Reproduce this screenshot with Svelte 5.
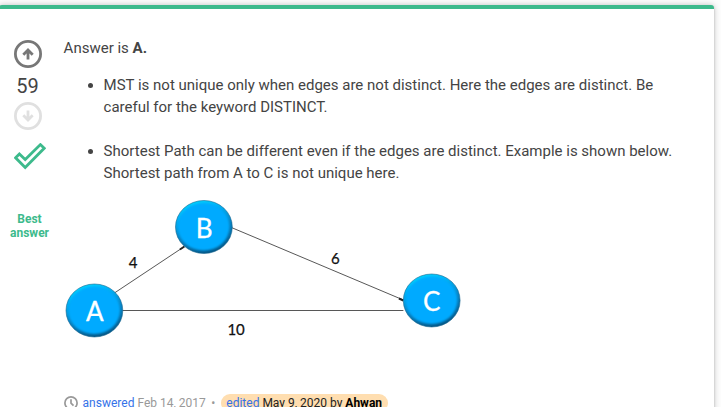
<script>
  const points = [
    ['MST is not unique only when edges are not distinct. Here the edges are distinct. Be', 'careful for the keyword DISTINCT.'],
    ['Shortest Path can be different even if the edges are distinct. Example is shown below.', 'Shortest path from A to C is not unique here.']
  ];
  const nodes = [
    { name: 'A', x: 94, y: 310.5, tx: 94.3, ty: 320.5 },
    { name: 'B', x: 203.5, y: 227, tx: 203.8, ty: 237.5 },
    { name: 'C', x: 431.3, y: 300.5, tx: 431.3, ty: 310.5 }
  ];
</script>

<div class="page">
  <article class="card">
    <aside class="votes">
      <svg class="vote" viewBox="0 0 28 28">
        <circle cx="14" cy="14" r="12.6" />
        <path d="M14 19.6V10.5M9.3 14.8L14 10.1L18.7 14.8" />
      </svg>
      <div class="score">59</div>
      <svg class="vote down" viewBox="0 0 28 28">
        <circle cx="14" cy="14" r="12.6" />
        <path d="M14 8.4V17.5M9.3 13.2L14 17.9L18.7 13.2" />
      </svg>
      <svg class="check" viewBox="0 0 32 27">
        <path d="M1.6 14.8L5.4 11L11.2 16.5L26.4 1.6L30.2 5.3L11.2 24.6Z" />
      </svg>
      <div class="best">Best<br />answer</div>
    </aside>
    <section class="content">
      <p>Answer is <b>A.</b></p>
      <ul>
        {#each points as [first, second]}
          <li>{first}<br />{second}</li>
        {/each}
      </ul>
      <svg class="graph" viewBox="63.6 196 400 144" width="400" height="144">
        <defs>
          <linearGradient id="rim" x1="0.3" y1="0" x2="0.65" y2="1">
            <stop offset="0" stop-color="#00d8ff" />
            <stop offset="0.22" stop-color="#00b4f6" />
            <stop offset="0.55" stop-color="#0884c4" />
            <stop offset="1" stop-color="#045482" />
          </linearGradient>
          <filter id="soften" x="-10%" y="-10%" width="120%" height="120%">
            <feGaussianBlur stdDeviation="1" />
          </filter>
        </defs>
        <g class="edges">
          <path d="M114 293L184 246.5M231 227.5L403 300M122 310.5H403" />
          <path class="tip" d="M179.5 249.5L184 246.5M398.5 298.5L403 300.5" />
        </g>
        {#each nodes as node}
          <ellipse cx={node.x} cy={node.y} rx="28.4" ry="26.5" fill="url(#rim)" stroke="#17658f" stroke-width=".6" />
          <ellipse cx={node.x - 0.2} cy={node.y - 0.2} rx="25.8" ry="23.8" fill="#00aaff" filter="url(#soften)" />
          <text class="name" x={node.tx} y={node.ty}>{node.name}</text>
        {/each}
        <text class="weight" x="132.8" y="268">4</text>
        <text class="weight" x="335" y="264">6</text>
        <text class="weight" x="235.7" y="335">10</text>
      </svg>
      <footer>
        <svg class="clock" viewBox="0 0 14 14">
          <circle cx="7" cy="7" r="6.1" />
          <path d="M7 3.2V7.2L9.5 9.7" />
        </svg>
        <span class="answered"><a>answered</a> Feb 14, 2017</span>
        <span class="dot">•</span>
        <span class="edited"><a>edited</a> May 9, 2020 by <b>Ahwan</b></span>
      </footer>
    </section>
  </article>
</div>

<style>
  :global(body) { margin: 0; background: #fdfdfd; overflow: hidden; }
  .page { width: 721px; height: 407px; overflow: hidden; box-sizing: border-box; padding-top: 5px; background: #fdfdfd; font-family: Roboto, sans-serif; color: #444; }
  .card { display: flex; box-sizing: border-box; width: 715px; height: 440px; margin-left: -1px; padding-left: 1px; background: #fff; border-top: 4px solid #3dba8c; border-radius: 3px; box-shadow: 0 0 6px rgba(0,0,0,.24), 0 1px 2px rgba(0,0,0,.2); }
  .votes { width: 63.6px; padding-top: 30px; display: flex; flex-direction: column; flex-shrink: 0; }
  .vote { width: 28px; height: 28px; margin-left: 13.7px; margin-top: .5px; fill: none; stroke: #777; stroke-width: 2.8; }
  .down { stroke: #e0e0e0; margin-top: 6px; }
  .score { width: 55px; height: 28px; line-height: 36px; text-align: center; font-size: 20px; }
  .check { width: 32px; height: 27px; margin: 13.5px 0 0 14px; fill: none; stroke: #3dba8c; stroke-width: 2.8; }
  .best { width: 59px; margin-top: 42px; text-align: center; font-weight: 700; font-size: 12px; line-height: 14px; color: #3dba8c; }
  .content { width: 640px; flex-shrink: 0; font-size: 15px; line-height: 22px; }
  p { margin: 28px 0 15px; }
  ul { margin: 0; padding-left: 40px; }
  li { white-space: nowrap; margin-bottom: 22px; }
  li:last-child { margin-bottom: 12px; }
  .graph { display: block; }
  .edges { fill: none; stroke: #444; stroke-width: .9; }
  .edges .tip { stroke: #222; stroke-width: 2; }
  .name, .weight { font-family: Lato, sans-serif; text-anchor: middle; }
  .name { fill: #fff; stroke: #fff; stroke-width: .3; font-size: 26px; }
  .weight { fill: #111; stroke: #111; stroke-width: .25; font-size: 15px; }
  footer { display: flex; align-items: center; margin-top: 54px; height: 18px; font-size: 12px; line-height: 18px; color: #999; white-space: nowrap; }
  .clock { width: 14px; height: 14px; margin-right: 5px; fill: none; stroke: #999; stroke-width: 1.7; }
  a { color: #3572e8; }
  .dot { width: 15px; text-align: center; }
  .edited { padding: 0 5.5px; border-radius: 9px; background: #ffdeb0; color: #222; }
  .edited b { color: #000; }
</style>
